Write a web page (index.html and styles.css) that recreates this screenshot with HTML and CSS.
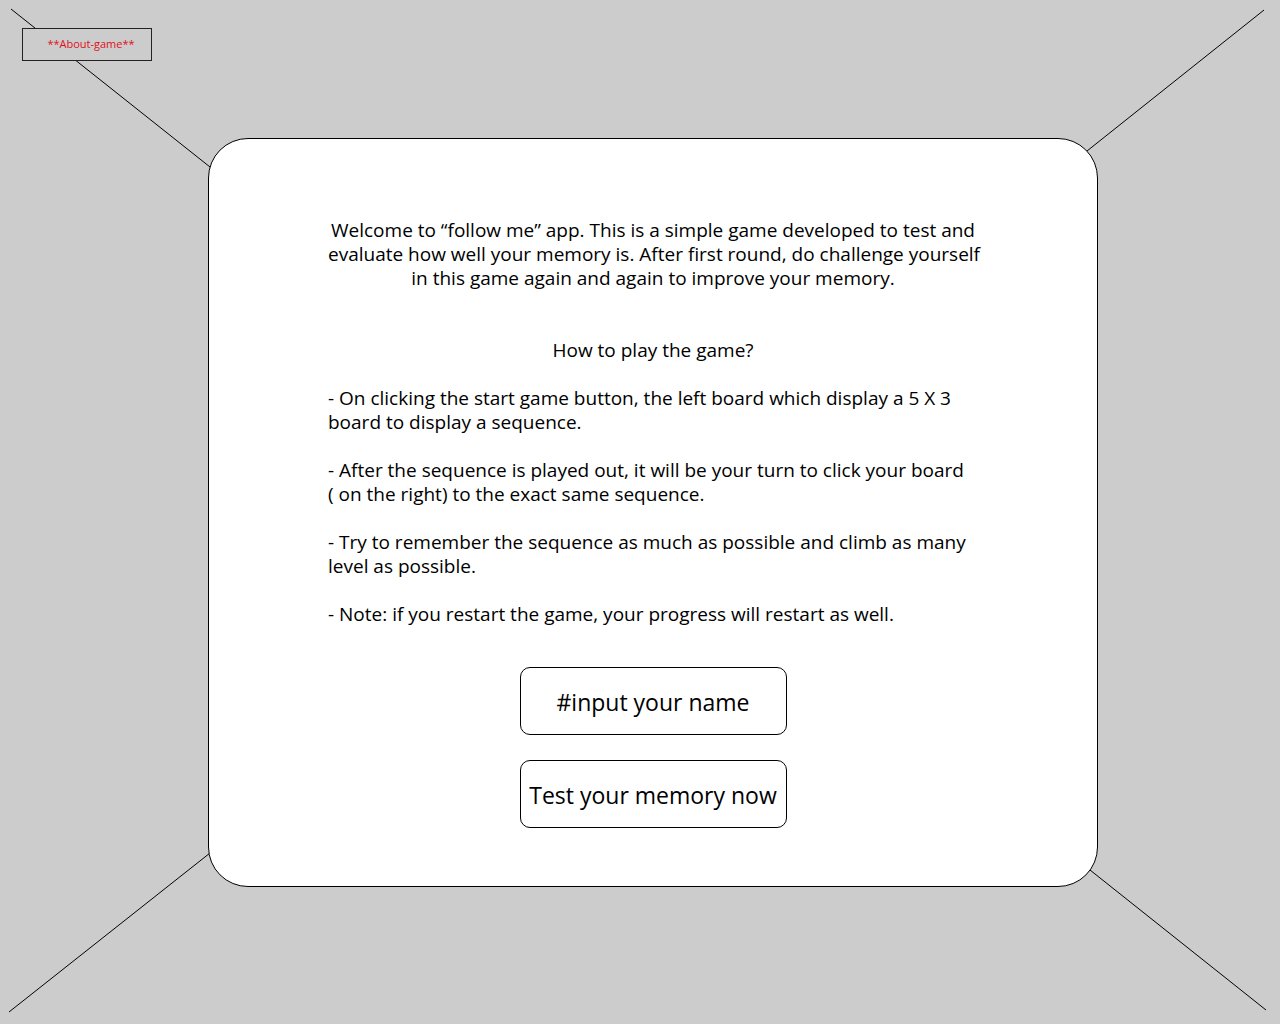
FILE: index.html
```html
<!DOCTYPE html>
<html>
<head>
<meta charset="utf-8">
<link rel="stylesheet" href="styles.css">
</head>
<body>
<svg class="lines" width="1280" height="1024" viewBox="0 0 1280 1024">
  <line x1="11" y1="9" x2="210" y2="167"/>
  <line x1="1264" y1="10" x2="1087" y2="151"/>
  <line x1="9" y1="1012" x2="210" y2="853"/>
  <line x1="1266" y1="1010" x2="1090" y2="870"/>
</svg>
<div class="page">
  <div class="about">**About-game**</div>
  <div class="card">
    <p class="intro">Welcome to “follow me” app. This is a simple game developed to test and<br>evaluate how well your memory is. After first round, do challenge yourself<br>in this game again and again to improve your memory.</p>
    <p class="heading">How to play the game?</p>
    <p class="rule">- On clicking the start game button, the left board which display a 5 X 3<br>board to display a sequence.</p>
    <p class="rule">- After the sequence is played out, it will be your turn to click your board<br>( on the right) to the exact same sequence.</p>
    <p class="rule">- Try to remember the sequence as much as possible and climb as many<br>level as possible.</p>
    <p class="rule">- Note: if you restart the game, your progress will restart as well.</p>
    <div class="actions">
      <div class="btn">#input your name</div>
      <div class="btn">Test your memory now</div>
    </div>
  </div>
</div>
</body>
</html>
```
FILE: styles.css
```css
html, body {
  margin: 0;
  padding: 0;
}
body {
  background: #cccccc;
  width: 1280px;
  height: 1024px;
  overflow: hidden;
  position: relative;
  font-family: "Open Sans", "Noto Sans", sans-serif;
  color: #000;
}
.lines {
  position: absolute;
  left: 0;
  top: 0;
  z-index: 0;
}
.lines line {
  stroke: #000;
  stroke-width: 1;
}
.page {
  position: relative;
  z-index: 1;
  padding: 28px 0 0 22px;
}
.about {
  box-sizing: border-box;
  width: 130px;
  height: 33px;
  border: 1px solid #222;
  background: #cccccc;
  color: #e0101a;
  font-size: 11px;
  padding: 0 0 2px 8px;
  display: flex;
  align-items: center;
  justify-content: center;
}
.card {
  box-sizing: border-box;
  margin: 77px 0 0 186px;
  width: 890px;
  height: 749px;
  background: #fff;
  border: 1px solid #000;
  border-radius: 40px;
  padding: 79px 110px 0 119px;
  font-size: 19px;
  line-height: 24px;
  white-space: nowrap;
}
.card p {
  margin: 0;
}
.intro {
  text-align: center;
  padding-right: 9px;
}
.heading {
  text-align: center;
  padding-right: 9px;
  margin-top: 48px !important;
  margin-bottom: 24px !important;
}
.rule + .rule {
  margin-top: 24px !important;
}
.actions {
  display: flex;
  flex-direction: column;
  align-items: center;
  gap: 25px;
  margin-top: 41px;
  padding-right: 9px;
}
.btn {
  box-sizing: border-box;
  width: 267px;
  height: 68px;
  border: 1px solid #000;
  border-radius: 10px;
  padding-top: 2px;
  display: flex;
  align-items: center;
  justify-content: center;
  font-size: 23px;
  white-space: nowrap;
}
```
